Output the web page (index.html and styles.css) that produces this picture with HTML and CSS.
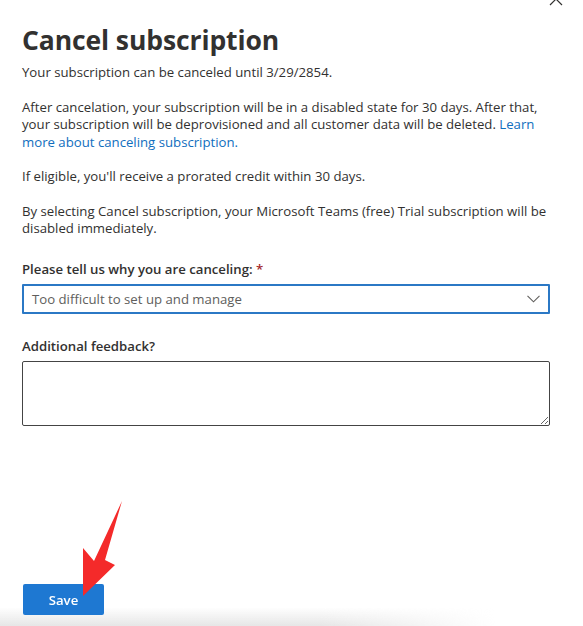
FILE: index.html
```html
<!DOCTYPE html>
<html lang="en">

<head>
    <meta charset="UTF-8">
    <meta name="viewport" content="width=device-width, initial-scale=1.0">
    <title>Cancel subscription</title>
    <link rel="stylesheet" href="styles.css">
</head>

<body>
    <main class="panel">
        <button class="close-button" aria-label="Close">
            <svg width="14" height="14" viewBox="0 0 14 14">
                <path d="M1 1 L13 13 M13 1 L1 13" stroke="#323130" stroke-width="1.2" fill="none" />
            </svg>
        </button>

        <div class="content">
            <h1>Cancel subscription</h1>
            <p>Your subscription can be canceled until 3/29/2854.</p>
            <p>After cancelation, your subscription will be in a disabled state for 30 days. After that, your subscription will be deprovisioned and all customer data will be deleted. <a href="#">Learn more about canceling subscription.</a></p>
            <p>If eligible, you'll receive a prorated credit within 30 days.</p>
            <p>By selecting Cancel subscription, your Microsoft Teams (free) Trial subscription will be disabled immediately.</p>

            <div class="field">
                <label class="field-label">Please tell us why you are canceling: <span class="required">*</span></label>
                <div class="dropdown">
                    <span class="dropdown-text">Too difficult to set up and manage</span>
                    <svg class="chevron" width="13" height="8" viewBox="0 0 13 8">
                        <path d="M0.5 0.8 L6.5 6.8 L12.5 0.8" stroke="#605e5c" stroke-width="1.1" fill="none" />
                    </svg>
                </div>
            </div>

            <div class="field">
                <label class="field-label">Additional feedback?</label>
                <textarea class="feedback"></textarea>
            </div>
        </div>

        <div class="footer">
            <button class="save-button">Save</button>
        </div>

        <!-- annotation arrow pointing to Save -->
        <svg class="arrow" width="60" height="110" viewBox="0 0 60 110">
            <path d="M51 2 L34 61 L44 66 L12 97 L12 49 L23 62 Z" fill="#f42a2a" />
        </svg>
    </main>
</body>

</html>
```

FILE: styles.css
```css
body {
    margin: 0;
    background-color: #fff;
    color: #323130;
    font-family: "Open Sans", "Noto Sans", sans-serif;
    font-size: 13.2px;
}

.panel {
    position: relative;
    display: flex;
    flex-direction: column;
    min-height: 100vh;
    box-sizing: border-box;
    padding: 0 33px 0 22px;
    overflow: hidden;
}

.close-button {
    position: absolute;
    top: -8px;
    right: 20px;
    padding: 0;
    border: none;
    background: none;
}

.content {
    flex: 1;
}

h1 {
    margin: 22px 0 6px;
    font-size: 26.5px;
    font-weight: 700;
    line-height: 36px;
    letter-spacing: -0.1px;
}

p {
    margin: 0 0 17px;
    line-height: 17.5px;
}

a {
    color: #106ebe;
    text-decoration: none;
}

.field {
    margin-top: 22px;
}

.field + .field {
    margin-top: 23px;
}

.field-label {
    display: block;
    margin-bottom: 6px;
    font-weight: 600;
    line-height: 18px;
}

.required {
    color: #a4262c;
}

.dropdown {
    display: flex;
    align-items: center;
    justify-content: space-between;
    height: 30px;
    box-sizing: border-box;
    padding: 0 6px 0 8px;
    border: 2px solid #2b78c5;
    border-radius: 1px;
}

.dropdown-text {
    color: #605e5c;
}

.chevron {
    margin-right: 2px;
}

.feedback {
    display: block;
    width: 100%;
    height: 65px;
    box-sizing: border-box;
    margin: 0;
    border: 1px solid #444;
    border-radius: 2px;
    font-family: inherit;
}

.footer {
    padding: 0 0 11px 23px;
    margin: 0 -33px 0 -22px;
    background: linear-gradient(to bottom, rgba(255, 255, 255, 0) 55%, #e6e6e6 100%);
    -webkit-mask-image: linear-gradient(to right, #000 55%, transparent 85%);
    mask-image: linear-gradient(to right, #000 55%, transparent 85%);
}

.save-button {
    width: 81px;
    height: 31px;
    border: none;
    border-radius: 2px;
    background-color: #1e78d2;
    color: #fff;
    font-family: inherit;
    font-size: 13.2px;
    font-weight: 600;
}

.arrow {
    position: absolute;
    left: 71px;
    top: 499px;
}
```
